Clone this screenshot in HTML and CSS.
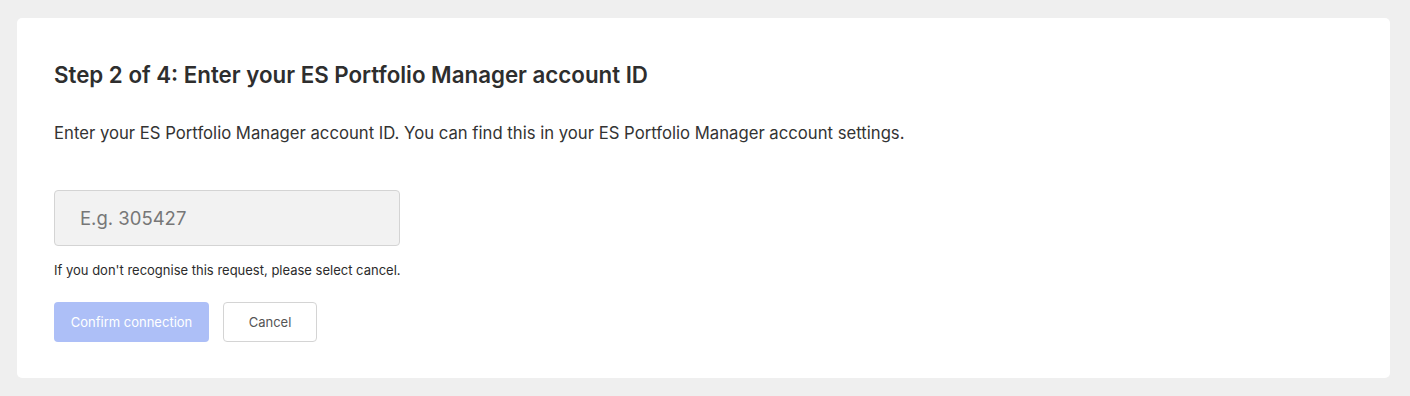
FILE: index.html
```html
<!DOCTYPE html>
<html lang="en">
<head>
    <meta charset="UTF-8">
    <meta name="viewport" content="width=device-width, initial-scale=1.0">
    <title>Connect ES Portfolio Manager</title>
    <link rel="stylesheet" href="styles.css">
</head>
<body>
    <div class="card">
        <h2 class="step-title">Step 2 of 4: Enter your ES Portfolio Manager account ID</h2>
        <p class="step-text">Enter your ES Portfolio Manager account ID. You can find this in your ES Portfolio Manager account settings.</p>

        <input class="account-input" type="text" placeholder="E.g. 305427">
        <p class="hint">If you don't recognise this request, please select cancel.</p>

        <div class="actions">
            <button class="btn btn-primary" disabled>Confirm connection</button>
            <button class="btn btn-secondary">Cancel</button>
        </div>
    </div>
</body>
</html>
```

FILE: styles.css
```css
* {
    margin: 0;
    padding: 0;
    box-sizing: border-box;
}

body {
    background: #efefef;
    font-family: Inter, "Noto Sans", sans-serif;
    color: #2b2b2b;
    padding: 18px 20px 18px 17px;
}

.card {
    background: #ffffff;
    border-radius: 5px;
    padding: 42px 37px 36px;
    display: flex;
    flex-direction: column;
    align-items: flex-start;
}

.step-title {
    font-size: 22.3px;
    font-weight: 600;
    line-height: 30px;
    color: #2e2e2e;
}

.step-text {
    margin-top: 31px;
    font-size: 16.7px;
    line-height: 24px;
    color: #333;
}

.account-input {
    margin-top: 45px;
    width: 346px;
    height: 56px;
    padding: 0 25px;
    background: #f2f2f2;
    border: 1px solid #d4d4d4;
    border-radius: 4px;
    font-family: inherit;
    font-size: 18.5px;
    color: #333;
}

.account-input::placeholder {
    color: #777;
}

.hint {
    margin-top: 15px;
    font-size: 13px;
    line-height: 18px;
    color: #2b2b2b;
}

.actions {
    margin-top: 23px;
    display: flex;
    gap: 14px;
}

.btn {
    height: 40px;
    border-radius: 4px;
    font-family: inherit;
    font-size: 13px;
    padding: 0 16px;
    cursor: pointer;
}

.btn-primary {
    width: 155px;
    background: #adbff7;
    border: none;
    color: #ffffff;
}

.btn-secondary {
    width: 94px;
    background: #ffffff;
    border: 1px solid #d4d4d4;
    color: #555;
}
```
